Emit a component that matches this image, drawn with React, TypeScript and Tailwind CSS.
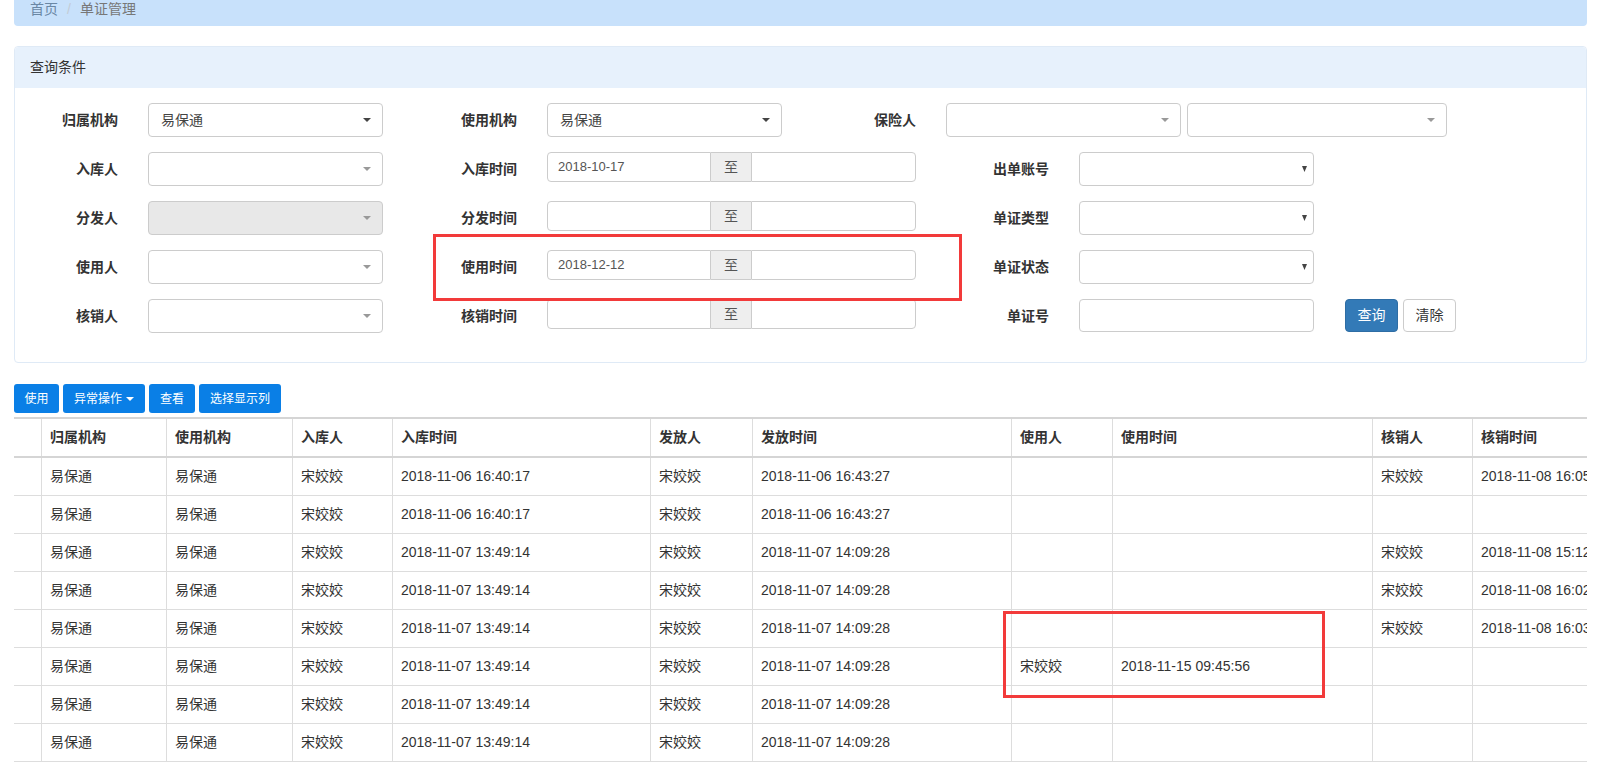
import React from 'react';

type Row = {
  owner: string;
  user: string;
  inPerson: string;
  inTime: string;
  sender: string;
  sendTime: string;
  usePerson: string;
  useTime: string;
  checker: string;
  checkTime: string;
};

const base = {
  owner: '易保通',
  user: '易保通',
  inPerson: '宋姣姣',
  sender: '宋姣姣',
  usePerson: '',
  useTime: '',
  checker: '',
  checkTime: '',
};

const rows: Row[] = [
  { ...base, inTime: '2018-11-06 16:40:17', sendTime: '2018-11-06 16:43:27', checker: '宋姣姣', checkTime: '2018-11-08 16:05:21' },
  { ...base, inTime: '2018-11-06 16:40:17', sendTime: '2018-11-06 16:43:27' },
  { ...base, inTime: '2018-11-07 13:49:14', sendTime: '2018-11-07 14:09:28', checker: '宋姣姣', checkTime: '2018-11-08 15:12:40' },
  { ...base, inTime: '2018-11-07 13:49:14', sendTime: '2018-11-07 14:09:28', checker: '宋姣姣', checkTime: '2018-11-08 16:02:11' },
  { ...base, inTime: '2018-11-07 13:49:14', sendTime: '2018-11-07 14:09:28', checker: '宋姣姣', checkTime: '2018-11-08 16:03:52' },
  { ...base, inTime: '2018-11-07 13:49:14', sendTime: '2018-11-07 14:09:28', usePerson: '宋姣姣', useTime: '2018-11-15 09:45:56' },
  { ...base, inTime: '2018-11-07 13:49:14', sendTime: '2018-11-07 14:09:28' },
  { ...base, inTime: '2018-11-07 13:49:14', sendTime: '2018-11-07 14:09:28' },
];

const cols = 'grid w-[1646px] grid-cols-[27px_125px_126px_100px_258px_102px_259px_101px_260px_100px_188px]';

function Label({ text, className }: { text: string; className: string }) {
  return (
    <div className={`flex h-[34px] shrink-0 items-center justify-end pr-[30px] text-[14px] font-bold text-[#333] ${className}`}>
      {text}
    </div>
  );
}

// select2 style box
function Select({ value, width, disabled }: { value?: string; width: string; disabled?: boolean }) {
  return (
    <div
      className={`flex h-[34px] shrink-0 items-center justify-between rounded-[4px] border border-[#ccc] pl-3 pr-[11px] text-[14px] text-[#444] ${width} ${
        disabled ? 'bg-[#e8e8e8]' : 'bg-white'
      }`}
    >
      <span>{value}</span>
      <svg width="8" height="4" viewBox="0 0 8 4">
        <polygon points="0,0 8,0 4,4" fill={value ? '#444' : '#999'} />
      </svg>
    </div>
  );
}

function NativeSelect() {
  return (
    <div className="flex h-[34px] w-[235px] shrink-0 items-center justify-end rounded-[4px] border border-[#ccc] bg-white pr-[6px]">
      <svg width="5" height="6" viewBox="0 0 5 6">
        <polygon points="0,0 5,0 2.5,6" fill="#444" />
      </svg>
    </div>
  );
}

function DateRange({ from }: { from?: string }) {
  return (
    <div className="flex h-[30px] w-[369px] shrink-0 text-[13px]">
      <div className="flex w-[164px] items-center rounded-l-[4px] border border-[#ccc] pl-[10px] text-[#555]">{from}</div>
      <div className="flex w-[40px] items-center justify-center border-y border-[#ccc] bg-[#eee] text-[14px] text-[#555]">至</div>
      <div className="w-[165px] rounded-r-[4px] border border-[#ccc]" />
    </div>
  );
}

function Cell({ children, first }: { children?: React.ReactNode; first?: boolean }) {
  return (
    <div className={`flex items-center overflow-hidden whitespace-nowrap px-2 ${first ? '' : 'border-l border-[#ddd]'}`}>
      {children}
    </div>
  );
}

export default function App() {
  const headers = ['归属机构', '使用机构', '入库人', '入库时间', '发放人', '发放时间', '使用人', '使用时间', '核销人', '核销时间'];
  const rowDefs: { label: string; control: React.ReactNode }[] = [
    { label: '入库人', control: <DateRange from="2018-10-17" /> },
    { label: '分发人', control: <DateRange /> },
    { label: '使用人', control: <DateRange from="2018-12-12" /> },
    { label: '核销人', control: <DateRange /> },
  ];
  const midLabels = ['入库时间', '分发时间', '使用时间', '核销时间'];
  const rightLabels = ['出单账号', '单证类型', '单证状态', '单证号'];

  return (
    <div className="relative h-[780px] w-[1602px] overflow-hidden bg-white font-['Liberation_Sans','Noto_Sans_CJK_SC',sans-serif] text-[#333]">
      <div className="ml-[14px] w-[1573px]">
        <div className="flex h-[26px] items-start rounded-b-[4px] bg-[#c8e1fb] pl-4 text-[14px] leading-[18px]">
          <span className="text-[#6a87a4]">首页</span>
          <span className="px-[9px] text-[#c3ccd6]">/</span>
          <span className="text-[#777]">单证管理</span>
        </div>

        <div className="mt-[20px] rounded-[4px] border border-[#dfeaf6] bg-white">
          <div className="flex h-[41px] items-center rounded-t-[4px] bg-[#e7f1fc] pl-[15px] text-[14px] text-[#333]">查询条件</div>
          <div className="flex flex-col gap-[15px] pb-[29px] pt-[15px]">
            <div className="flex items-start">
              <Label text="归属机构" className="w-[133px]" />
              <Select value="易保通" width="w-[235px]" />
              <Label text="使用机构" className="w-[164px]" />
              <Select value="易保通" width="w-[235px]" />
              <Label text="保险人" className="w-[164px]" />
              <Select width="w-[235px]" />
              <div className="ml-[6px]">
                <Select width="w-[260px]" />
              </div>
            </div>
            {rowDefs.map((r, i) => (
              <div key={r.label} className="flex items-start">
                <Label text={r.label} className="w-[133px]" />
                <Select width="w-[235px]" disabled={i === 1} />
                <Label text={midLabels[i]} className="w-[164px]" />
                {r.control}
                <Label text={rightLabels[i]} className="w-[163px]" />
                {i < 3 ? (
                  <NativeSelect />
                ) : (
                  <>
                    <div className="h-[33px] w-[235px] shrink-0 rounded-[4px] border border-[#ccc] bg-white" />
                    <button
                      type="button"
                      className="ml-[31px] h-[33px] w-[53px] rounded-[4px] border border-[#2e6da4] bg-[#337ab7] text-[14px] text-white"
                    >
                      查询
                    </button>
                    <button
                      type="button"
                      className="ml-[5px] h-[33px] w-[53px] rounded-[4px] border border-[#ccc] bg-white text-[14px] text-[#333]"
                    >
                      清除
                    </button>
                  </>
                )}
              </div>
            ))}
          </div>
        </div>

        <div className="mt-[21px] flex h-[29px] gap-[4px] text-[12px] text-white">
          <button type="button" className="w-[45px] rounded-[3px] bg-[#0a7fe6]">使用</button>
          <button type="button" className="flex w-[82px] items-center justify-center gap-[4px] rounded-[3px] bg-[#0a7fe6]">
            异常操作
            <span className="h-0 w-0 border-x-[4px] border-t-[4px] border-x-transparent border-t-white" />
          </button>
          <button type="button" className="w-[46px] rounded-[3px] bg-[#0a7fe6]">查看</button>
          <button type="button" className="w-[82px] rounded-[3px] bg-[#0a7fe6]">选择显示列</button>
        </div>

        <div className="mt-[4px] w-[1573px] overflow-hidden text-[14px]">
          <div className={`${cols} h-[41px] border-y-2 border-[#d5d5d5] font-bold`}>
            <Cell first />
            {headers.map((h) => (
              <Cell key={h}>{h}</Cell>
            ))}
          </div>
          {rows.map((r, i) => (
            <div key={i} className={`${cols} h-[38px] border-b border-[#ddd]`}>
              <Cell first />
              <Cell>{r.owner}</Cell>
              <Cell>{r.user}</Cell>
              <Cell>{r.inPerson}</Cell>
              <Cell>{r.inTime}</Cell>
              <Cell>{r.sender}</Cell>
              <Cell>{r.sendTime}</Cell>
              <Cell>{r.usePerson}</Cell>
              <Cell>{r.useTime}</Cell>
              <Cell>{r.checker}</Cell>
              <Cell>{r.checkTime}</Cell>
            </div>
          ))}
        </div>
      </div>

      <div className="absolute left-[433px] top-[234px] h-[67px] w-[529px] border-[3px] border-[#f23a3a]" />
      <div className="absolute left-[1003px] top-[611px] h-[87px] w-[322px] border-[3px] border-[#f23a3a]" />
    </div>
  );
}
